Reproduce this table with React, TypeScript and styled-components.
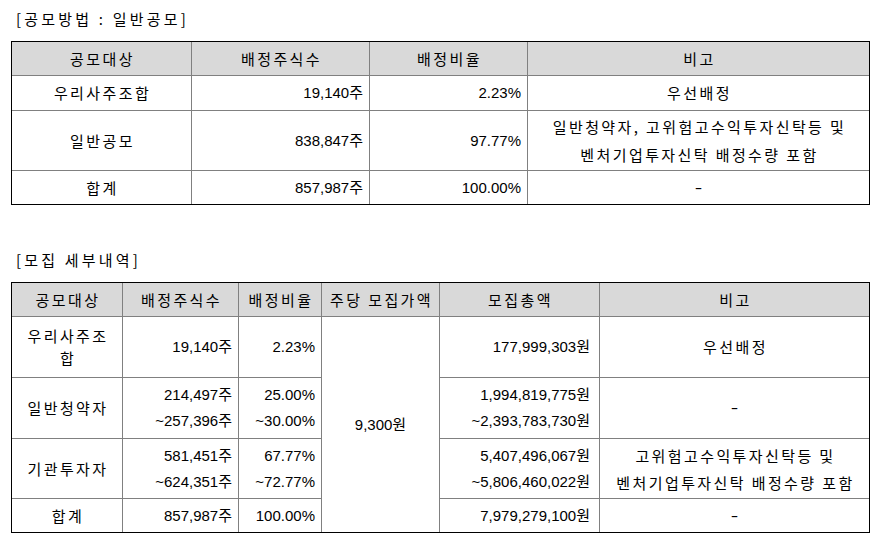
import React from "react";
import styled, { createGlobalStyle, css } from "styled-components";

const KO = `"Noto Sans CJK KR", "Noto Sans", sans-serif`;
const NUM = `"Liberation Sans", "Noto Sans CJK KR", sans-serif`;

const Global = createGlobalStyle`
  html, body { margin: 0; padding: 0; background: #fff; }
  body {
    font-family: ${KO};
    color: #000;
    font-size: 15px;
  }
`;

const Page = styled.div`
  padding: 9px 10px 0 11px;
`;

const Title = styled.div<{ $top?: number }>`
  margin: ${(p) => p.$top ?? 0}px 0 12px 5px;
  line-height: 20px;
  letter-spacing: 3.2px;
`;

const Table = styled.table<{ $lh: number }>`
  width: 859px;
  table-layout: fixed;
  border-collapse: separate;
  border-spacing: 0;
  border: 1px solid #000;
  line-height: ${(p) => p.$lh}px;
  tbody tr:last-child td { border-bottom: none; }
`;

const Row = styled.tr<{ $h: number }>`
  height: ${(p) => p.$h}px;
`;

const Head = styled.th`
  background: #d9d9d9;
  font-weight: normal;
  text-align: center;
  letter-spacing: 2.4px;
  padding: 0 0 0 2px;
  white-space: nowrap;
  border-right: 1px solid #808080;
  border-bottom: 1px solid #808080;
  &:last-child { border-right: none; }
`;

type Kind = "ko" | "num" | "mid";

const Cell = styled.td<{ $kind?: Kind; $pad?: number; $noBottom?: boolean }>`
  white-space: nowrap;
  vertical-align: middle;
  border-right: 1px solid #808080;
  border-bottom: ${(p) => (p.$noBottom ? "none" : "1px solid #808080")};
  &:last-child { border-right: none; }
  ${(p) =>
    p.$kind === "num"
      ? css`
          font-family: ${NUM};
          text-align: right;
          padding: 0 ${p.$pad ?? 6}px 0 0;
        `
      : p.$kind === "mid"
      ? css`
          font-family: ${NUM};
          text-align: center;
          padding: 0;
        `
      : css`
          text-align: center;
          letter-spacing: 2.4px;
          padding: 0 0 0 2px;
        `}
`;

const Line = styled.span<{ $lh?: number }>`
  display: block;
  ${(p) => (p.$lh ? `line-height: ${p.$lh}px;` : "")}
`;

const Dash = styled.span`
  display: inline-block;
  transform: scaleX(1.5);
`;

export default function App() {
  return (
    <>
      <Global />
      <Page>
        <Title>[공모방법 : 일반공모]</Title>
        <Table $lh={28}>
          <colgroup>
            <col style={{ width: 180 }} />
            <col style={{ width: 178 }} />
            <col style={{ width: 158 }} />
            <col style={{ width: 341 }} />
          </colgroup>
          <thead>
            <Row $h={34}>
              <Head>공모대상</Head>
              <Head>배정주식수</Head>
              <Head>배정비율</Head>
              <Head>비고</Head>
            </Row>
          </thead>
          <tbody>
            <Row $h={35}>
              <Cell>우리사주조합</Cell>
              <Cell $kind="num">19,140주</Cell>
              <Cell $kind="num">2.23%</Cell>
              <Cell>우선배정</Cell>
            </Row>
            <Row $h={60}>
              <Cell>일반공모</Cell>
              <Cell $kind="num">838,847주</Cell>
              <Cell $kind="num">97.77%</Cell>
              <Cell>
                <Line>일반청약자, 고위험고수익투자신탁등 및</Line>
                <Line>벤처기업투자신탁 배정수량 포함</Line>
              </Cell>
            </Row>
            <Row $h={33}>
              <Cell>합계</Cell>
              <Cell $kind="num">857,987주</Cell>
              <Cell $kind="num">100.00%</Cell>
              <Cell $kind="mid"><Dash>-</Dash></Cell>
            </Row>
          </tbody>
        </Table>

        <Title $top={45}>[모집 세부내역]</Title>
        <Table $lh={26}>
          <colgroup>
            <col style={{ width: 111 }} />
            <col style={{ width: 116 }} />
            <col style={{ width: 83 }} />
            <col style={{ width: 118 }} />
            <col style={{ width: 160 }} />
            <col style={{ width: 269 }} />
          </colgroup>
          <thead>
            <Row $h={34}>
              <Head>공모대상</Head>
              <Head>배정주식수</Head>
              <Head>배정비율</Head>
              <Head>주당 모집가액</Head>
              <Head>모집총액</Head>
              <Head>비고</Head>
            </Row>
          </thead>
          <tbody>
            <Row $h={61}>
              <Cell>
                <Line $lh={22}>우리사주조</Line>
                <Line $lh={22}>합</Line>
              </Cell>
              <Cell $kind="num">19,140주</Cell>
              <Cell $kind="num">2.23%</Cell>
              <Cell $kind="mid" rowSpan={4} $noBottom>
                <Line>9,300원</Line>
              </Cell>
              <Cell $kind="num" $pad={9}>177,999,303원</Cell>
              <Cell>우선배정</Cell>
            </Row>
            <Row $h={61}>
              <Cell>일반청약자</Cell>
              <Cell $kind="num">
                <Line>214,497주</Line>
                <Line>~257,396주</Line>
              </Cell>
              <Cell $kind="num">
                <Line>25.00%</Line>
                <Line>~30.00%</Line>
              </Cell>
              <Cell $kind="num" $pad={9}>
                <Line>1,994,819,775원</Line>
                <Line>~2,393,783,730원</Line>
              </Cell>
              <Cell $kind="mid"><Dash>-</Dash></Cell>
            </Row>
            <Row $h={60}>
              <Cell>기관투자자</Cell>
              <Cell $kind="num">
                <Line>581,451주</Line>
                <Line>~624,351주</Line>
              </Cell>
              <Cell $kind="num">
                <Line>67.77%</Line>
                <Line>~72.77%</Line>
              </Cell>
              <Cell $kind="num" $pad={9}>
                <Line>5,407,496,067원</Line>
                <Line>~5,806,460,022원</Line>
              </Cell>
              <Cell>
                <Line $lh={27}>고위험고수익투자신탁등 및</Line>
                <Line $lh={27}>벤처기업투자신탁 배정수량 포함</Line>
              </Cell>
            </Row>
            <Row $h={33}>
              <Cell>합계</Cell>
              <Cell $kind="num">857,987주</Cell>
              <Cell $kind="num">100.00%</Cell>
              <Cell $kind="num" $pad={9}>7,979,279,100원</Cell>
              <Cell $kind="mid"><Dash>-</Dash></Cell>
            </Row>
          </tbody>
        </Table>
      </Page>
    </>
  );
}
